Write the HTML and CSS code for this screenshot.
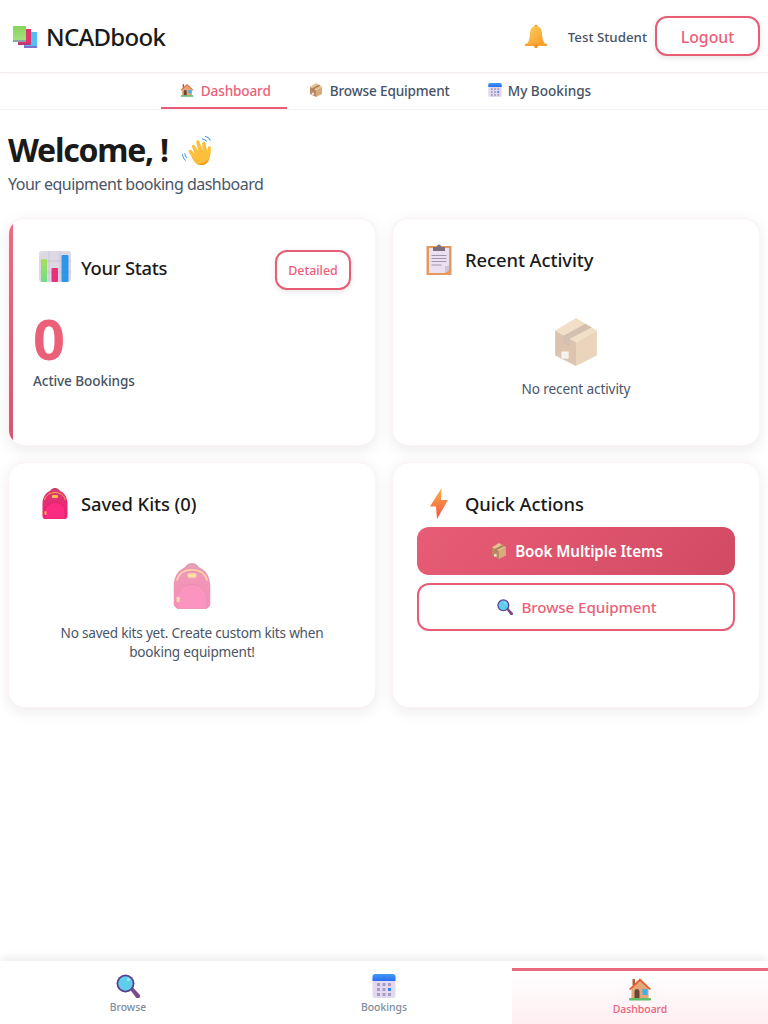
FILE: index.html
```html
<!DOCTYPE html>
<html lang="en">
<head>
  <meta charset="UTF-8" />
  <meta name="viewport" content="width=device-width, initial-scale=1.0">
  <title>NCADbook</title>
  <link rel="stylesheet" href="styles.css">
</head>
<body>
  <!-- shared emoji drawings -->
  <svg class="defs" width="0" height="0" aria-hidden="true">
    <defs>
      <linearGradient id="g-bell" x1="0" y1="0" x2="1" y2="1"><stop offset="0" stop-color="#fdd05a"/><stop offset="1" stop-color="#f59a2c"/></linearGradient>
      <linearGradient id="g-bolt" x1="0.5" y1="0" x2="0.5" y2="1"><stop offset="0" stop-color="#fdb24a"/><stop offset="1" stop-color="#f2503f"/></linearGradient>
      <linearGradient id="g-bag" x1="0" y1="0" x2="0" y2="1"><stop offset="0" stop-color="#d9386f"/><stop offset="1" stop-color="#f81e78"/></linearGradient>
      <linearGradient id="g-cal" x1="0" y1="0" x2="0" y2="1"><stop offset="0" stop-color="#3d9bfa"/><stop offset="1" stop-color="#2a6cf0"/></linearGradient>
      <linearGradient id="g-green" x1="0" y1="0" x2="0" y2="1"><stop offset="0" stop-color="#86d45e"/><stop offset="1" stop-color="#a4e07c"/></linearGradient>
      <linearGradient id="g-bar" x1="0" y1="0" x2="0" y2="1"><stop offset="0" stop-color="#a8e05c"/><stop offset="1" stop-color="#6edc8a"/></linearGradient>

      <symbol id="i-books" viewBox="0 0 24 22">
        <rect x="11" y="6" width="13" height="16" fill="#7e72cf"/>
        <rect x="12" y="6" width="12" height="14" fill="#4fc0f6"/>
        <rect x="5" y="3" width="13" height="16" fill="#b93a78"/>
        <rect x="6" y="3" width="12" height="14" fill="#e3336f"/>
        <rect x="0" y="0" width="13" height="16" fill="#8aa5a8"/>
        <rect x="0" y="0" width="13" height="14" fill="url(#g-green)"/>
      </symbol>

      <symbol id="i-bell" viewBox="0 0 24 24">
        <circle cx="12" cy="2.500" r="1.800" fill="#f59a2c"/>
        <path d="M12 2C7.500 2 6 6 6 10c0 5-2 8-3 10.500h18c-1-2.500-3-5.500-3-10.500 0-4-1.500-8-6-8z" fill="url(#g-bell)"/>
        <rect x="1" y="19.500" width="22" height="2.500" rx="1" fill="#f7a12f"/>
        <circle cx="12" cy="22.500" r="1.700" fill="#ee8f27"/>
      </symbol>

      <symbol id="i-house" viewBox="0 0 24 24">
        <rect x="4.500" y="2" width="2.500" height="6" fill="#a8623e"/>
        <path d="M3.500 11L12 3l8.500 8v11h-17z" fill="#e3a877"/>
        <path d="M1 12L12 1.500 23 12l-1.300 1L12 4 2.300 13z" fill="#e9572f"/>
        <path d="M6.500 21.500v-7a2.500 2.500 0 0 1 5 0v7z" fill="#6b4637"/>
        <rect x="14.500" y="12" width="5" height="6" fill="#3fb0ee"/>
        <rect x="1" y="21" width="22" height="2.500" rx="1" fill="#63bb6c"/>
      </symbol>

      <symbol id="i-box" viewBox="2 0.500 20 23">
        <path d="M2 6.500L12 12v11.500L2 18.500z" fill="#bb8a63"/>
        <path d="M22 6.500L12 12v11.500l10-5z" fill="#d7ab7b"/>
        <path d="M12 .5l10 6L12 12 2 6.500z" fill="#e5c192"/>
        <path d="M16.500 3.300L6 9v3.500l3 1.500v-3.500L19.500 5z" fill="#a9825f"/>
        <rect x="5" y="16.500" width="3.500" height="3.500" fill="#efe6dc"/>
      </symbol>

      <symbol id="i-cal" viewBox="0 0 24 24">
        <rect x=".5" y="0" width="23" height="24" rx="3" fill="#e3d8f0"/>
        <path d="M.5 7V3a3 3 0 0 1 3-3h17a3 3 0 0 1 3 3v4z" fill="url(#g-cal)"/>
        <g fill="#a69cc2">
          <rect x="5" y="9" width="3" height="3"/><rect x="10.500" y="9" width="3" height="3"/><rect x="16" y="9" width="3" height="3"/>
          <rect x="5" y="14" width="3" height="3"/><rect x="10.500" y="14" width="3" height="3"/>
          <rect x="5" y="19" width="3" height="3"/><rect x="10.500" y="19" width="3" height="3"/><rect x="16" y="19" width="3" height="3"/>
        </g>
        <rect x="16" y="14" width="3" height="3" fill="#2a86ee"/>
      </symbol>

      <symbol id="i-lens" viewBox="0 0 24 24">
        <path d="M14 15.500l2.500-2.500 7 7.500a2.200 2.200 0 0 1-3.500 3z" fill="#7c4a86"/>
        <circle cx="9.500" cy="9.500" r="9" fill="#5a3f8c"/>
        <circle cx="9.500" cy="9.500" r="7.200" fill="#5fcdec"/>
        <circle cx="12.500" cy="5.500" r="1.500" fill="#a5e6f7"/>
      </symbol>

      <symbol id="i-chart" viewBox="0 0 32 32">
        <rect width="32" height="31" rx="3" fill="#ddd9e4"/>
        <path d="M10 0v31M21 0v31M0 10h32M0 21h32" stroke="#c9c5d2" stroke-width="1"/>
        <rect x="2" y="8" width="6" height="23" rx="1" fill="url(#g-bar)"/>
        <rect x="12.500" y="17" width="6.500" height="14" rx="1" fill="#ea2f7a"/>
        <rect x="22.500" y="4" width="7" height="27" rx="1" fill="#2e95ee"/>
      </symbol>

      <symbol id="i-clip" viewBox="0 0 26 31">
        <rect x=".5" y="2" width="25" height="29" fill="#e39a5c"/>
        <path d="M3 4h20v22l-4 3H3z" fill="#e9e1f2"/>
        <path d="M19 29l4-3v-4h-4z" fill="#cfc4dc"/>
        <path d="M7 3h12v4H7z" fill="#7d6f7e"/>
        <circle cx="13" cy="2.500" r="2" fill="#7d6f7e"/>
        <path d="M5.500 11.500h15M5.500 14.500h15M5.500 17.500h15M5.500 21h10" stroke="#a195ac" stroke-width="1.200"/>
      </symbol>

      <symbol id="i-bag" viewBox="0 0 26 32">
        <path d="M7.500 7c0-8 11-8 11 0h-2c0-5-7-5-7 0z" fill="#c53f6c"/>
        <path d="M13 3C5 3 .5 9 .5 17v12a3 3 0 0 0 3 3h19a3 3 0 0 0 3-3V17c0-8-4.500-14-12.500-14z" fill="url(#g-bag)"/>
        <path d="M2.500 13C4 8 8 5.500 13 5.500S22 8 23.500 13" fill="none" stroke="#f9ac4c" stroke-width="1"/>
        <rect x="10" y="8" width="6" height="3" rx="1" fill="#fcc04f"/>
        <path d="M3 32V25c0-6 4.500-9.500 10-9.500s10 3.500 10 9.500v7z" fill="#fb2b82" stroke="#c9245f" stroke-width=".5"/>
        <rect x="2.500" y="24" width="2" height="4" rx="1" fill="#fcc04f"/>
      </symbol>

      <symbol id="i-bolt" viewBox="0 0 18 31">
        <path d="M11.500 0L0 18.500h6L7 31l11-19h-7z" fill="url(#g-bolt)"/>
      </symbol>

      <symbol id="i-wave" viewBox="0 0 36 34">
        <path d="M22 3c2 .5 4 1.500 5 3M25 .5c2.500.5 5 2.200 6 4.500M3 19c0 2 1 4 2.500 5M.5 20c.2 3 1.500 5.500 3.500 7" fill="none" stroke="#3a97e0" stroke-width="1.100"/>
        <path d="M9 20l-1.500-2.500c-1-2 1.500-3.500 3-1.800L14 20 11 12c-.8-2.200 2-3.400 3.200-1.400L18 17l-2.500-10c-.6-2.300 2.700-3.200 3.500-1l3.500 10-.5-7.500c-.2-2.400 3-2.800 3.600-.4L27.500 17l.8-4.500c.5-2 3.200-1.700 3.200.4 0 5-.5 8.500-1.500 11.600C28 31 21.500 33.500 16 30.500 12.500 28.500 11 23.500 9 20z" fill="#fcbf3b"/>
        <path d="M16 30.500c5.500 3 12 .5 14-6-3 3.500-9 6.500-14 6z" fill="#f19b25"/>
      </symbol>
    </defs>
  </svg>

  <header class="topbar">
    <div class="brand">
      <svg class="brand-icon"><use href="#i-books"/></svg>
      <span class="brand-name">NCADbook</span>
    </div>
    <div class="user-area">
      <svg class="bell"><use href="#i-bell"/></svg>
      <span class="user-name">Test Student</span>
      <button class="btn-outline logout">Logout</button>
    </div>
  </header>

  <nav class="tabs">
    <a class="tab active"><svg class="tab-icon"><use href="#i-house"/></svg>Dashboard</a>
    <a class="tab"><svg class="tab-icon"><use href="#i-box"/></svg>Browse Equipment</a>
    <a class="tab"><svg class="tab-icon"><use href="#i-cal"/></svg>My Bookings</a>
  </nav>

  <main class="content">
    <div class="welcome">
      <h1>Welcome, ! <svg class="wave"><use href="#i-wave"/></svg></h1>
      <p>Your equipment booking dashboard</p>
    </div>

    <div class="cards">
      <section class="card card-stats">
        <div class="card-head spaced">
          <h2><span class="head-icon"><svg class="ic-chart"><use href="#i-chart"/></svg></span>Your Stats</h2>
          <button class="btn-outline detailed">Detailed</button>
        </div>
        <div class="stat-num">0</div>
        <div class="stat-label">Active Bookings</div>
      </section>

      <section class="card">
        <div class="card-head">
          <h2><span class="head-icon"><svg class="ic-clip"><use href="#i-clip"/></svg></span>Recent Activity</h2>
        </div>
        <div class="empty">
          <svg class="empty-box"><use href="#i-box"/></svg>
          <p>No recent activity</p>
        </div>
      </section>

      <section class="card">
        <div class="card-head">
          <h2><span class="head-icon"><svg class="ic-bag"><use href="#i-bag"/></svg></span>Saved Kits (0)</h2>
        </div>
        <div class="empty empty-kits">
          <svg class="empty-bag"><use href="#i-bag"/></svg>
          <p>No saved kits yet. Create custom kits when booking equipment!</p>
        </div>
      </section>

      <section class="card">
        <div class="card-head">
          <h2><span class="head-icon"><svg class="ic-bolt"><use href="#i-bolt"/></svg></span>Quick Actions</h2>
        </div>
        <div class="actions">
          <button class="action primary"><svg class="action-icon"><use href="#i-box"/></svg>Book Multiple Items</button>
          <button class="action secondary"><svg class="action-icon"><use href="#i-lens"/></svg>Browse Equipment</button>
        </div>
      </section>
    </div>
  </main>

  <nav class="bottom-nav">
    <a class="bottom-item"><svg class="bottom-icon"><use href="#i-lens"/></svg>Browse</a>
    <a class="bottom-item"><svg class="bottom-icon"><use href="#i-cal"/></svg>Bookings</a>
    <a class="bottom-item active"><svg class="bottom-icon"><use href="#i-house"/></svg>Dashboard</a>
  </nav>
</body>
</html>
```

FILE: styles.css
```css
* {
  box-sizing: border-box;
}
html, body {
  height: 100%;
}
body {
  font-family: "Noto Sans", "Open Sans", sans-serif;
  background: #fff;
  color: #1a1a1a;
  margin: 0;
  display: flex;
  flex-direction: column;
  overflow: hidden;
}
.defs {
  position: absolute;
}
.topbar {
  height: 73px;
  flex: none;
  display: flex;
  align-items: center;
  justify-content: space-between;
  padding: 0 8px 0 13px;
  border-bottom: 1px solid #f6eef1;
  box-shadow: 0 1px 3px rgba(0,0,0,0.04);
}
.brand {
  display: flex;
  align-items: center;
  gap: 9px;
  font-size: 24px;
  font-weight: 500;
  letter-spacing: -0.7px;
}
.brand-icon {
  width: 24px;
  height: 22px;
  margin-top: 2px;
}
.user-area {
  display: flex;
  align-items: center;
}
.bell {
  width: 24px;
  height: 24px;
  margin-right: 20px;
}
.user-name {
  font-size: 13.3px;
  font-weight: 500;
  color: #465365;
  margin-right: 8px;
  padding-top: 2px;
}
.btn-outline {
  font-family: inherit;
  background: #fff;
  color: #ec5f78;
  border: 2px solid #e85d75;
  box-shadow: 0 2px 6px rgba(0,0,0,0.1);
  font-weight: 500;
}
.logout {
  width: 105px;
  height: 40px;
  padding-top: 2px;
  border-radius: 12px;
  font-size: 15.8px;
}
.tabs {
  flex: none;
  height: 37px;
  display: flex;
  justify-content: center;
  gap: 4px;
  border-bottom: 1px solid #f6f1f3;
}
.tab {
  display: flex;
  align-items: center;
  height: 36px;
  padding: 0 16px;
  font-size: 13.6px;
  font-weight: 500;
  color: #465365;
  letter-spacing: -0.15px;
  border-bottom: 2px solid transparent;
}
.tab:last-child {
  letter-spacing: 0;
}
.tab.active {
  color: #ec5f78;
  border-bottom-color: #e85d75;
}
.tab-icon {
  width: 14px;
  height: 14px;
  margin: 0 7px 0 2px;
}
.tab.active .tab-icon {
  margin-left: 3px;
}
.tab:last-child .tab-icon {
  margin-right: 6px;
}
.content {
  flex: 1;
  padding: 0 8px;
}
.welcome {
  padding-top: 19px;
}
.welcome h1 {
  margin: 0;
  font-size: 32px;
  line-height: 42px;
  font-weight: 700;
  letter-spacing: -1.25px;
}
.wave {
  width: 33px;
  height: 33px;
  vertical-align: -6px;
  margin-left: 7px;
}
.welcome p {
  margin: 2px 0 0;
  font-size: 16px;
  line-height: 22px;
  color: #4a5568;
  letter-spacing: -0.52px;
}
.cards {
  display: grid;
  grid-template-columns: 1fr 1fr;
  grid-template-rows: 228px 246px;
  gap: 16px;
  margin-top: 23px;
}
.card {
  position: relative;
  overflow: hidden;
  background: #fff;
  border: 1px solid #fdf1f4;
  border-radius: 16px;
  padding: 24px;
  box-shadow: 0 4px 16px rgba(0,0,0,0.08);
}
/* accent bar clipped by the card corners */
.card-stats::before {
  content: "";
  position: absolute;
  left: 0;
  top: 0;
  bottom: 0;
  width: 4px;
  background: linear-gradient(180deg, #f06a80, #d9546e);
}
.card-head {
  display: flex;
  align-items: center;
}
.card-head.spaced {
  justify-content: space-between;
  padding-top: 7px;
}
.card-head h2 {
  margin: 0;
  display: flex;
  align-items: center;
  font-size: 18.4px;
  font-weight: 500;
  letter-spacing: -0.08px;
}
.card-head.spaced h2 {
  margin-bottom: 6px;
  letter-spacing: -0.25px;
}
.head-icon {
  width: 43px;
  height: 32px;
  margin-right: 5px;
  display: flex;
  align-items: center;
  justify-content: center;
  flex: none;
}
.ic-chart {
  width: 32px;
  height: 32px;
}
.ic-clip {
  width: 26px;
  height: 31px;
}
.ic-bag {
  width: 26px;
  height: 32px;
}
.ic-bolt {
  width: 18px;
  height: 31px;
}
.detailed {
  width: 76px;
  height: 40px;
  border-radius: 12px;
  font-size: 12.4px;
  padding: 0;
}
.stat-num {
  margin-top: 18px;
  font-size: 56px;
  line-height: 60px;
  font-weight: 700;
  color: #ec5f78;
}
.stat-label {
  margin-top: 3px;
  font-size: 13.6px;
  font-weight: 500;
  color: #465365;
  letter-spacing: -0.1px;
}
.empty {
  text-align: center;
  margin-top: 43px;
}
.empty svg {
  display: block;
  margin: 0 auto;
  opacity: 0.5;
}
.empty-box {
  width: 42px;
  height: 48px;
}
.empty-bag {
  width: 38px;
  height: 48px;
}
.empty p {
  margin: 13px 0 0;
  font-size: 13.6px;
  line-height: 19px;
  color: #4a5568;
  letter-spacing: -0.12px;
}
.empty-kits {
  margin-top: 42px;
  padding: 0 16px;
}
.empty-kits p {
  margin-top: 14px;
  letter-spacing: -0.22px;
}
.actions {
  display: flex;
  flex-direction: column;
  gap: 8px;
  margin-top: 8px;
}
.action {
  height: 48px;
  display: flex;
  align-items: center;
  justify-content: center;
  padding-left: 8px;
  font-family: inherit;
  font-size: 15.2px;
  font-weight: 500;
  border-radius: 12px;
  letter-spacing: -0.1px;
}
.action-icon {
  width: 16px;
  height: 16px;
  margin-right: 8px;
}
.action.primary {
  color: #fff;
  border: 0;
  font-weight: 600;
  letter-spacing: -0.1px;
  background: linear-gradient(135deg, #e85d75, #d14a63);
}
.action.secondary {
  color: #ec5f78;
  background: #fff;
  border: 2px solid #e85d75;
}
.bottom-nav {
  flex: none;
  height: 63px;
  display: grid;
  grid-template-columns: 1fr 1fr 1fr;
  background: #fff;
  box-shadow: 0 -2px 10px rgba(0,0,0,0.1);
}
.bottom-item {
  display: flex;
  flex-direction: column;
  align-items: center;
  padding-top: 13px;
  font-size: 10.4px;
  line-height: 14px;
  font-weight: 500;
  color: #7e8c9c;
}
.bottom-icon {
  width: 24px;
  height: 24px;
  margin-bottom: 2px;
}
.bottom-item.active {
  color: #ec5f78;
  margin-top: 7px;
  padding-top: 6px;
  border-top: 3px solid #ec6a80;
  background: linear-gradient(180deg, #fff, #ffeef2);
}
.bottom-item.active .bottom-icon {
  margin-bottom: 1px;
}
```
